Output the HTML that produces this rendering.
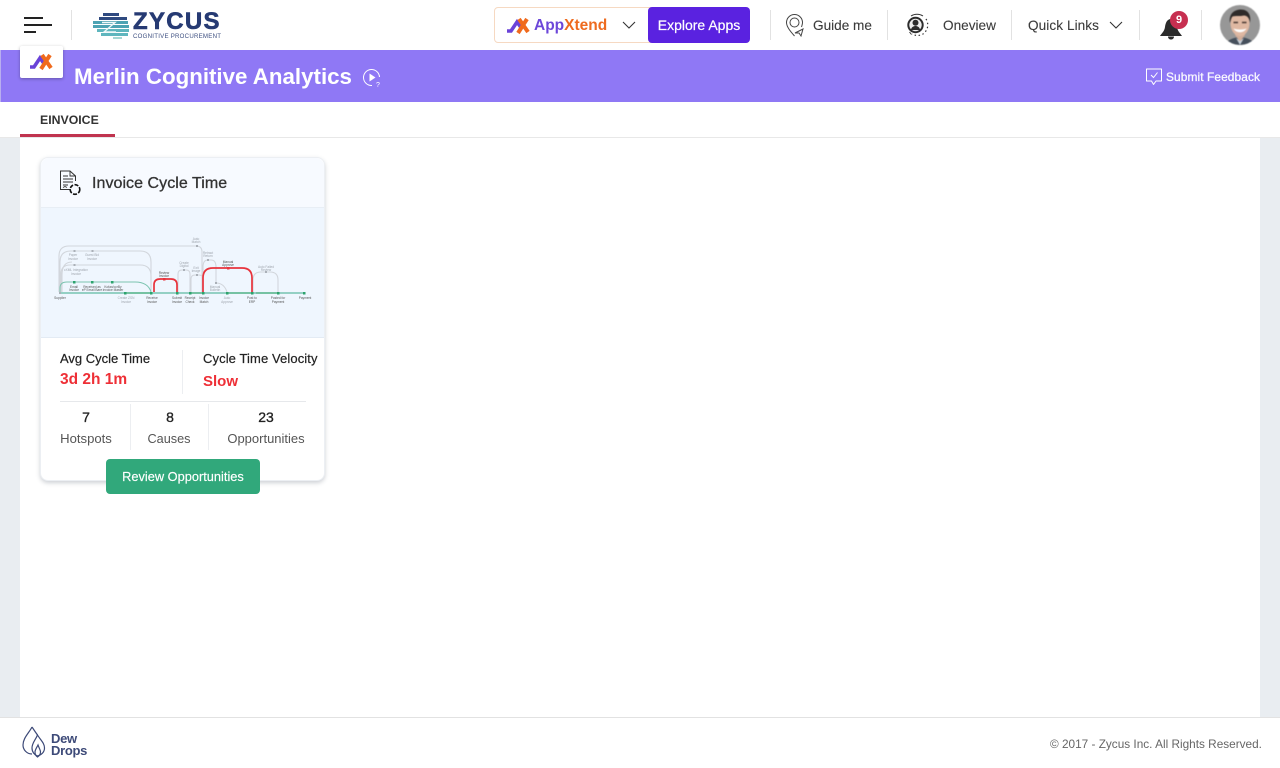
<!DOCTYPE html>
<html><head><meta charset="utf-8"><title>Merlin Cognitive Analytics</title>
<style>
*{box-sizing:border-box;margin:0;padding:0}
html,body{width:1280px;height:768px;overflow:hidden;background:#fff;font-family:"Liberation Sans",sans-serif;color:#333}
.a{position:absolute;white-space:nowrap}
.sep{position:absolute;top:10px;width:1px;height:30px;background:#e2e2e2}
svg{position:absolute;overflow:visible}
.navt{font-size:13.6px;color:#3b3b3b;top:17px;line-height:17px;-webkit-text-stroke:.1px #3b3b3b}
</style></head><body>
<!-- page bg -->
<div class="a" style="left:0;top:138px;width:1280px;height:580px;background:#e9edf1"></div>
<div class="a" style="left:20px;top:138px;width:1240px;height:580px;background:#fff"></div>

<!-- header -->
<div class="a" style="left:24px;top:17px;width:19px;height:2px;background:#222"></div>
<div class="a" style="left:24px;top:24px;width:28px;height:2px;background:#222"></div>
<div class="a" style="left:24px;top:31px;width:12px;height:2px;background:#222"></div>
<div class="sep" style="left:71px"></div>

<!-- zycus logo -->
<svg style="left:0;top:0;filter:blur(.25px)" width="140" height="50">
<g stroke-width="3.100" fill="none">
<path d="M103 14.500H119M99 18.500H127" stroke="#2f4a80"/>
<path d="M93 22.500H128M93 26.500H129" stroke="#4da3b3"/>
<path d="M97 30.500H129M101 34.500H128" stroke="#5fb6be"/>
<path d="M113 38H122" stroke="#a5d6d4" stroke-width="2"/>
</g>
<path d="M102 22.500H115L104 32H116" fill="none" stroke="#eef7f8" stroke-width="1.400"/>
</svg>
<div class="a" style="left:133px;top:8px;font-size:24px;line-height:28px;font-weight:bold;color:#263a73;letter-spacing:1.3px;-webkit-text-stroke:.6px #263a73">ZYCUS</div>
<div class="a" style="left:133px;top:32px;font-size:6.100px;line-height:9px;color:#3d4f80;letter-spacing:.25px">COGNITIVE PROCUREMENT</div>

<!-- appxtend -->
<div class="a" style="left:494px;top:7px;width:160px;height:36px;border:1px solid #f6d9c2;border-radius:4px;background:#fff"></div>
<svg style="left:506px;top:17px" width="26" height="17" viewBox="0 0 26 17">
<path d="M1 14L5 14L11 5L16 12" fill="none" stroke="#6a42d8" stroke-width="3.600"/>
<path d="M12 16L21 2M13 2L22 15" fill="none" stroke="#f06a1c" stroke-width="4"/>
</svg>
<div class="a" style="left:534px;top:17px;font-size:15.500px;line-height:18px;font-weight:bold"><span style="color:#6c47d9">App</span><span style="color:#ee6b1f">Xtend</span></div>
<svg style="left:622px;top:20px" width="14" height="10"><path d="M1 2L7 8L13 2" fill="none" stroke="#333" stroke-width="1.100"/></svg>
<div class="a" style="left:648px;top:7px;width:102px;height:36px;background:#5a22e0;border-radius:4px;color:#fff;font-size:14px;font-weight:500;line-height:36px;text-align:center;-webkit-text-stroke:.2px #fff">Explore Apps</div>

<div class="sep" style="left:770px"></div>
<svg style="left:784px;top:13px" width="22" height="24" viewBox="0 0 22 24" fill="none" stroke="#444" stroke-width="1">
<path d="M10.500 23C7 19 2.500 14 2.500 9.500A8 8 0 0 1 18.500 9.500C18.500 11 18 12.500 17.500 14"/>
<circle cx="10.500" cy="9.500" r="4.500"/>
<path d="M11 20L19 16L17 23L15 20Z"/>
</svg>
<div class="a navt" style="left:813px">Guide me</div>
<div class="sep" style="left:887px"></div>
<svg style="left:906px;top:13px" width="24" height="24" viewBox="0 0 24 24">
<path d="M5 3A11 11 0 0 1 17 3" fill="none" stroke="#333" stroke-width="1"/>
<path d="M20 6A11 11 0 0 1 17 21A11 11 0 0 1 6 21" fill="none" stroke="#333" stroke-width="1.200" stroke-dasharray="1.500 2.500"/>
<path d="M3.500 19L5.500 21.500" stroke="#333" stroke-width="1"/>
<circle cx="9.500" cy="12" r="7.200" fill="#eee" stroke="#2c2c2c" stroke-width="2"/>
<circle cx="9.500" cy="9.800" r="3" fill="#2c2c2c"/>
<path d="M4.800 17C5.500 14 7.500 13 9.500 13S13.500 14 14.200 17Z" fill="#2c2c2c"/>
</svg>
<div class="a navt" style="left:943px">Oneview</div>
<div class="sep" style="left:1011px"></div>
<div class="a navt" style="left:1028px;letter-spacing:.07px">Quick Links</div>
<svg style="left:1109px;top:20px" width="14" height="10"><path d="M1 2L7 8L13 2" fill="none" stroke="#333" stroke-width="1.100"/></svg>
<div class="sep" style="left:1139px"></div>
<svg style="left:1160px;top:18px" width="22" height="22" viewBox="0 0 22 22">
<path d="M11 1C15 1 16.500 5 17 9C17.500 13 20 15 22 18H0C2 15 4.500 13 5 9C5.500 5 7 1 11 1Z" fill="#2b2b2b"/>
<path d="M8 18.500H14C14 20.500 12.500 21.500 11 21.500S8 20.500 8 18.500Z" fill="#2b2b2b"/>
</svg>
<div class="a" style="left:1170px;top:11px;width:18px;height:18px;border-radius:50%;background:#c72f50;color:#fff;font-size:11px;font-weight:bold;line-height:18px;text-align:center">9</div>
<div class="sep" style="left:1201px"></div>
<svg style="left:1220px;top:5px;filter:blur(.5px)" width="40" height="40" viewBox="0 0 40 40">
<defs><clipPath id="av"><circle cx="20" cy="20" r="20"/></clipPath></defs>
<g clip-path="url(#av)">
<rect width="40" height="40" fill="#979797"/>
<path d="M4 44C5 35 12 33 20 32C28 33 35 35 36 44Z" fill="#46505c"/>
<path d="M15 30L20 37L25 30L25 25H15Z" fill="#d2ae9a"/>
<path d="M16 33L20 40L24 33L20 36Z" fill="#c6ced8"/>
<ellipse cx="20" cy="18.500" rx="9.500" ry="12.500" fill="#dfb8a2"/>
<path d="M10 18C8.500 9 14 4.500 21 4.500C28 4.500 31.500 10 30 18C29.500 13 27 10.500 24 10.500C20 11.500 15 10.500 12.500 11.500C11 13 11 15 10 18Z" fill="#2e2a29"/>
<path d="M13.500 17.500H18M22 17.500H26.500" stroke="#4a3a34" stroke-width="1.400"/>
<path d="M13.500 23.500C16 28.500 24 28.500 26.500 23.500C23 24.800 17 24.800 13.500 23.500Z" fill="#fff"/>
</g></svg>

<!-- purple band -->
<div class="a" style="left:0;top:50px;width:1280px;height:52px;background:#8f78f5;border-left:1px solid #b9aef0"></div>
<div class="a" style="left:20px;top:46px;width:43px;height:32px;background:#fff;border-radius:2px;box-shadow:0 1px 3px rgba(0,0,0,.3)"></div>
<svg style="left:29px;top:53px" width="26" height="17" viewBox="0 0 26 17">
<path d="M1 14L5 14L11 5L16 12" fill="none" stroke="#6a42d8" stroke-width="3.600"/>
<path d="M12 16L21 2M13 2L22 15" fill="none" stroke="#f06a1c" stroke-width="4"/>
</svg>
<div class="a" style="left:74px;top:62px;font-size:22.300px;line-height:29px;font-weight:bold;color:#fff">Merlin Cognitive Analytics</div>
<svg style="left:362px;top:68px" width="20" height="20" viewBox="0 0 20 20" fill="none" stroke="#fff" stroke-width="1">
<path d="M17.500 9A8 8 0 1 0 10 17.500"/>
<path d="M7.500 5.500L13.500 9.500L7.500 13.500Z" fill="#fff" stroke="none"/>
<text x="14" y="19" font-size="7" fill="#fff" stroke="none" font-family="Liberation Sans">?</text>
</svg>
<svg style="left:1145px;top:68px" width="18" height="18" viewBox="0 0 18 18" fill="none" stroke="#fff" stroke-width="1">
<path d="M1.500 1H16.500V13H11L8.500 16.500L6.500 13H1.500Z" stroke-linejoin="round"/>
<path d="M6 7L8.500 9.500L12.500 4.500"/>
</svg>
<div class="a" style="left:1166px;top:70px;font-size:11.900px;line-height:15px;color:#fff;letter-spacing:.1px;-webkit-text-stroke:.3px #fff;opacity:.95">Submit Feedback</div>

<!-- tabs -->
<div class="a" style="left:0;top:102px;width:1280px;height:36px;background:#fff;border-bottom:1px solid #e8e8e8"></div>
<div class="a" style="left:40px;top:112px;font-size:12.300px;line-height:16px;font-weight:bold;color:#333">EINVOICE</div>
<div class="a" style="left:20px;top:134px;width:95px;height:3px;background:#c0344f"></div>

<!-- card -->
<div class="a" style="left:40px;top:157px;width:285px;height:324px;background:#fff;border:1px solid #eceff3;border-radius:8px;box-shadow:0 2px 4px rgba(60,70,90,.25)"></div>
<div class="a" style="left:41px;top:158px;width:283px;height:50px;background:#f7faff;border-radius:8px 8px 0 0;border-bottom:1px solid #e8eef5"></div>
<svg style="left:59px;top:170px" width="24" height="26" viewBox="0 0 24 26" fill="none" stroke="#333" stroke-width="1">
<path d="M12 19.500H1.500V1H11L16.500 6V11"/>
<path d="M11 1V6H16.500M4 6H9M4 9H14M4 12H14M4 15H9" stroke-width=".9"/>
<path d="M4 17.500L6 16.500L8 17.500" stroke-width=".9"/>
<circle cx="16" cy="19.500" r="4.800" stroke="#111" stroke-width="1.600" stroke-dasharray="4 1.500"/>
</svg>
<div class="a" style="left:92px;top:174px;font-size:16px;line-height:19px;letter-spacing:.05px;color:#333;-webkit-text-stroke:.3px #333">Invoice Cycle Time</div>

<!-- diagram -->
<div class="a" style="left:41px;top:208px;width:283px;height:130px;background:#eff6fe;border-bottom:1px solid #e3ebf4"></div>
<svg style="left:0;top:0;filter:blur(.35px)" width="340" height="340" font-family="Liberation Sans" font-size="3.200" text-anchor="middle" fill="#777">
<g fill="none" stroke="#d2d6dc" stroke-width="1.100">
<path d="M59 292V256Q59 246 69 246H196Q202 246 202 252V292"/>
<path d="M60 292V262Q60 251 71 251H140Q151 251 151 262V292"/>
<path d="M61 292V274Q61 265 70 265H140Q151 265 151 276V292"/>
<path d="M62 292V275Q62 262 72 262"/>
<path d="M178 292V274Q178 270 182 270H186Q190 270 190 274V292"/>
<path d="M191 292V279Q191 275 195 275H199Q203 275 203 279V292"/>
<path d="M203 292V267Q203 260 208 260H211Q216 260 216 267V283"/>
<path d="M216 283Q224 283 227 292" />
<path d="M253 292V280Q253 272 261 272H270Q278 272 278 280V292"/>
</g>
<path d="M60 292V288Q60 282 67 282H135Q148 282 151 292" fill="none" stroke="#7cc4b0" stroke-width="1"/>
<path d="M60 293H304" stroke="#39a98a" stroke-width=".9"/>
<path d="M125 293H151M190 293H203M227 293H252M256 293H278" stroke="#2da36d" stroke-width="1.300"/>
<path d="M154 292V285Q154 279 160 279H171Q177 279 177 285V292" fill="none" stroke="#e8333c" stroke-width="1.700"/>
<path d="M203 292V278Q203 268 213 268H242Q252 268 252 278V292" fill="none" stroke="#e8333c" stroke-width="1.700"/>
<g fill="#2da36d">
<rect x="124" y="292" width="2.500" height="2.500"/><rect x="150" y="292" width="2.500" height="2.500"/><rect x="176" y="292" width="2.500" height="2.500"/><rect x="189" y="292" width="2.500" height="2.500"/><rect x="202" y="292" width="2.500" height="2.500"/><rect x="226" y="292" width="2.500" height="2.500"/><rect x="251" y="292" width="2.500" height="2.500"/><rect x="277" y="292" width="2.500" height="2.500"/><rect x="303" y="292" width="2.500" height="2.500"/>
<rect x="73" y="281" width="2.500" height="2.500"/><rect x="91" y="281" width="2.500" height="2.500"/><rect x="111" y="281" width="2.500" height="2.500"/>
</g>
<g fill="#aab0b8">
<rect x="59" y="292" width="2" height="2"/><rect x="73.500" y="250" width="2" height="2"/><rect x="91.500" y="250" width="2" height="2"/><rect x="73.500" y="264" width="2" height="2"/><rect x="196" y="245" width="2" height="2"/><rect x="207" y="259" width="2" height="2"/><rect x="215" y="282" width="2" height="2"/><rect x="183" y="269" width="2" height="2"/><rect x="196" y="274" width="2" height="2"/><rect x="265" y="271" width="2" height="2"/>
</g>
<rect x="163" y="278" width="2.500" height="2.500" fill="#e8333c"/><rect x="227" y="267" width="2.500" height="2.500" fill="#e8333c"/>
<g fill="#555">
<text x="60" y="299">Supplier</text>
<text x="74" y="288">Email</text><text x="74" y="291">Invoice</text>
<text x="92" y="288">Received as</text><text x="92" y="291">eP Email Bare</text>
<text x="113" y="288">Kofax/ocrBy</text><text x="113" y="291">Invoice Master</text>
<text x="152" y="299">Receive</text><text x="152" y="303">Invoice</text>
<text x="177" y="299">Submit</text><text x="177" y="303">Invoice</text>
<text x="190" y="299">Receipt</text><text x="190" y="303">Check</text>
<text x="204" y="299">Invoice</text><text x="204" y="303">Match</text>
<text x="252" y="299">Post to</text><text x="252" y="303">ERP</text>
<text x="278" y="299">Posted for</text><text x="278" y="303">Payment</text>
<text x="305" y="299">Payment</text>
<text x="164" y="274">Review</text><text x="164" y="277">Invoice</text>
<text x="228" y="263">Manual</text><text x="228" y="266">Approve</text>
</g>
<g fill="#a0a6ae">
<text x="73" y="256">Paper</text><text x="73" y="260">Invoice</text>
<text x="92" y="256">Guest Bid</text><text x="92" y="260">Invoice</text>
<text x="76" y="271">cXML Integration</text><text x="76" y="275">Invoice</text>
<text x="126" y="299">Create ZSN</text><text x="126" y="303">Invoice</text>
<text x="227" y="299">Auto</text><text x="227" y="303">Approve</text>
<text x="196" y="240">Auto</text><text x="196" y="243">Match</text>
<text x="184" y="264">Create</text><text x="184" y="267">Digital</text>
<text x="196" y="269">Exit</text><text x="196" y="272">Image</text>
<text x="208" y="254">Retract</text><text x="208" y="257">Return</text>
<text x="215" y="288">Manual</text><text x="215" y="291">Bulletin</text>
<text x="266" y="268">Auto Failed</text><text x="266" y="271">Review</text>
</g>
</svg>

<!-- stats -->
<div class="a" style="left:60px;top:351px;font-size:13px;line-height:16px;color:#222;-webkit-text-stroke:.2px #222">Avg Cycle Time</div>
<div class="a" style="left:60px;top:371px;font-size:15.500px;line-height:18px;font-weight:bold;color:#ee2f36">3d 2h 1m</div>
<div class="a" style="left:182px;top:350px;width:1px;height:44px;background:#eceef1"></div>
<div class="a" style="left:203px;top:351px;font-size:13px;line-height:16px;letter-spacing:.1px;color:#222;-webkit-text-stroke:.2px #222">Cycle Time Velocity</div>
<div class="a" style="left:203px;top:373px;font-size:15px;line-height:18px;font-weight:bold;color:#ee2f36">Slow</div>
<div class="a" style="left:60px;top:401px;width:246px;height:1px;background:#e6e8eb"></div>
<div class="a" style="left:130px;top:404px;width:1px;height:46px;background:#eceef1"></div>
<div class="a" style="left:208px;top:404px;width:1px;height:46px;background:#eceef1"></div>
<div class="a" style="left:46px;top:409px;width:80px;text-align:center;font-size:14px;line-height:17px;color:#222;-webkit-text-stroke:.3px #222">7</div>
<div class="a" style="left:130px;top:409px;width:80px;text-align:center;font-size:14px;line-height:17px;color:#222;-webkit-text-stroke:.3px #222">8</div>
<div class="a" style="left:226px;top:409px;width:80px;text-align:center;font-size:14px;line-height:17px;color:#222;-webkit-text-stroke:.3px #222">23</div>
<div class="a" style="left:46px;top:431px;width:80px;text-align:center;font-size:13.100px;line-height:16px;color:#555">Hotspots</div>
<div class="a" style="left:129px;top:431px;width:80px;text-align:center;font-size:12.700px;line-height:16px;color:#555">Causes</div>
<div class="a" style="left:216px;top:431px;width:100px;text-align:center;font-size:13px;line-height:16px;color:#555">Opportunities</div>
<div class="a" style="left:106px;top:459px;width:154px;height:35px;background:#31a87b;border-radius:4px;color:#fff;font-size:12.800px;line-height:36px;text-align:center;-webkit-text-stroke:.15px #fff">Review Opportunities</div>

<!-- footer -->
<div class="a" style="left:0;top:717px;width:1280px;height:51px;background:#fff;border-top:1px solid #e2e2e2"></div>
<svg style="left:21px;top:726px" width="26" height="33" viewBox="0 0 26 33" fill="none" stroke="#3d4a78" stroke-width="1.200">
<path d="M11 1C8 7 2 12 2 19C2 24 6 28 11 28"/><path d="M11 1C13 4 15 7 16.500 9"/>
<path d="M17 9C15 14 11.500 17 11.500 22C11.500 26 14 29 17 30C21 29 24 26 24 22C24 17 20 14 17 9Z" transform="translate(-.5 0)"/>
<path d="M17 19C15.500 22 14 24 14 26C14 28 15 30 16.500 31C18 30 19.500 28 19.500 26C19.500 24 18 22 17 19Z"/>
</svg>
<div class="a" style="left:51px;top:733px;font-size:13px;line-height:12px;font-weight:bold;color:#3d4a78;letter-spacing:-.3px;white-space:normal;width:40px">Dew<br>Drops</div>
<div class="a" style="left:1050px;top:737px;font-size:11.800px;line-height:15px;color:#666">© 2017 - Zycus Inc. All Rights Reserved.</div>
</body></html>
